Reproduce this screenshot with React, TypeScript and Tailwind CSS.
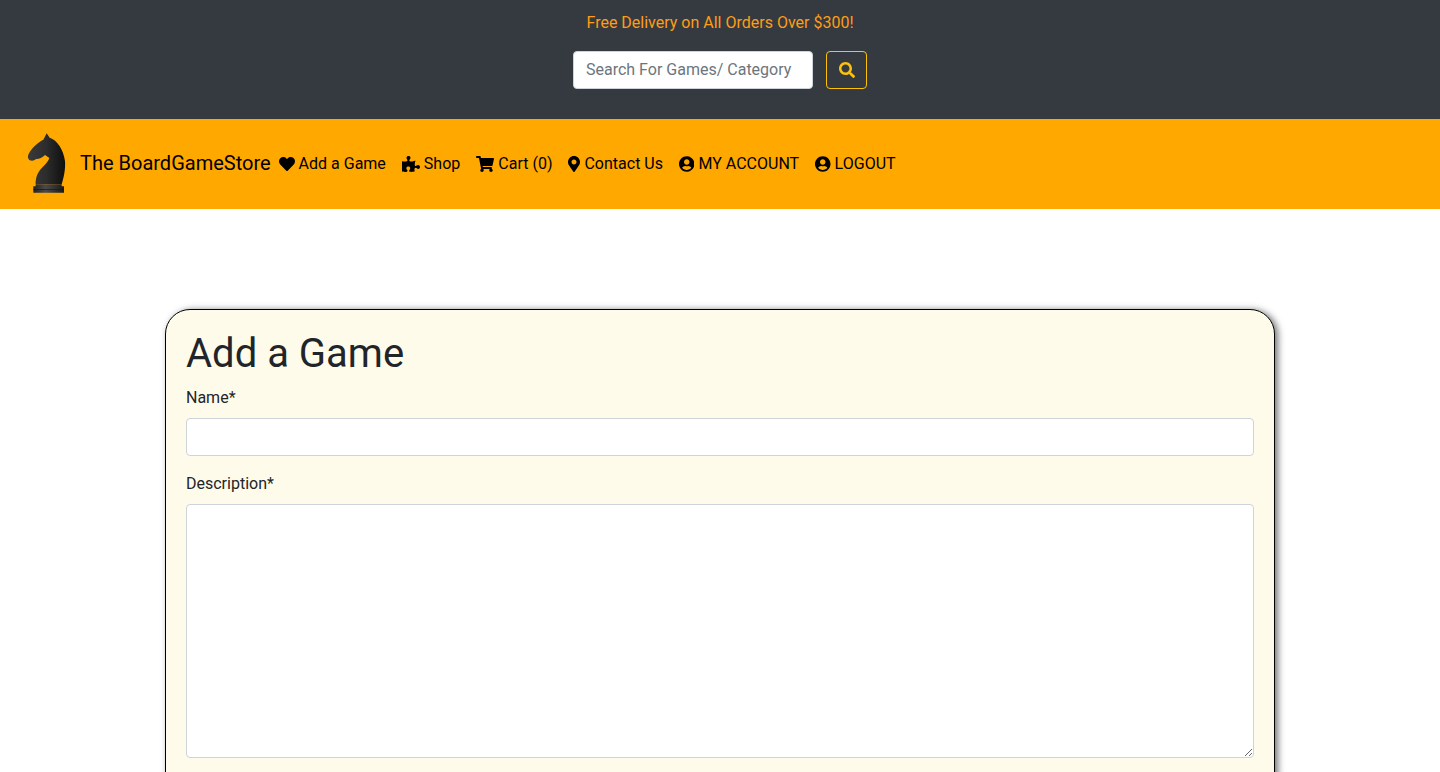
import { FaHeart, FaMapMarkerAlt, FaPuzzlePiece, FaSearch, FaShoppingCart, FaUserCircle } from 'react-icons/fa'
import type { IconType } from 'react-icons'

const navLinks: { label: string; icon: IconType; size: string }[] = [
  { label: 'Add a Game', icon: FaHeart, size: 'w-[16px]' },
  { label: 'Shop', icon: FaPuzzlePiece, size: 'w-[18px]' },
  { label: 'Cart (0)', icon: FaShoppingCart, size: 'w-[18px]' },
  { label: 'Contact Us', icon: FaMapMarkerAlt, size: 'w-[12px]' },
  { label: 'MY ACCOUNT', icon: FaUserCircle, size: 'w-[15.5px]' },
  { label: 'LOGOUT', icon: FaUserCircle, size: 'w-[15.5px]' },
]

function KnightLogo() {
  return (
    <svg viewBox="21 24 126 180" className="-mt-[2px] h-[60px] w-[42px]">
      <defs>
        <linearGradient id="knight" x1="0" y1="0" x2="1" y2="0">
          <stop offset="0" stopColor="#3a3a3a" />
          <stop offset="0.5" stopColor="#2c2c2c" />
          <stop offset="1" stopColor="#0e0e0e" />
        </linearGradient>
        <linearGradient id="knightBase" x1="0" y1="0" x2="1" y2="0">
          <stop offset="0" stopColor="#222222" />
          <stop offset="0.4" stopColor="#4a4a4a" />
          <stop offset="1" stopColor="#1a1a1a" />
        </linearGradient>
      </defs>
      <path
        d="M80 25 L89 38 C112 46 130 72 135 108 C137 132 131 158 125 178 L47 178 C46 160 52 142 66 128 C76 118 86 108 88 99 L75 90 C66 98 56 103 48 102 C42 108 34 108 28 105 C22 100 23 92 27 85 C36 68 54 52 70 44 Z"
        fill="url(#knight)"
      />
      <path d="M47 178 H125 V184 H132 V203 H40 V184 H47 Z" fill="url(#knightBase)" />
      <path d="M40 192 H132 V194 H40 Z" fill="#151515" />
    </svg>
  )
}

export default function App() {
  return (
    <div className="h-[772px] overflow-hidden bg-white font-['Roboto',sans-serif] text-[16px] text-black">
      <div className="h-[119px] bg-[#343a40] pt-[11px]">
        <p className="text-center leading-[24px] text-[#ff9d14]">Free Delivery on All Orders Over $300!</p>
        <form className="mt-[16px] flex justify-center gap-[13px]">
          <input
            placeholder="Search For Games/ Category"
            className="h-[38px] w-[240px] rounded border border-[#ced4da] bg-white px-3 pb-[2px] text-[#495057] placeholder:text-[#6c757d]"
          />
          <button type="button" className="flex h-[38px] w-[41px] items-center justify-center rounded border border-[#ffc107] text-[#ffc107]">
            <FaSearch className="h-[16px] w-[16px]" />
          </button>
        </form>
      </div>

      <nav className="flex h-[90px] items-center bg-[#ffa800] pl-[27px]">
        <a className="flex items-center">
          <KnightLogo />
          <span className="ml-[11px] pb-[2px] text-[20px] leading-[30px]">The BoardGameStore</span>
        </a>
        <ul className="ml-[8px] flex items-center gap-[16px]">
          {navLinks.map(({ label, icon: Icon, size }) => (
            <li key={label} className="flex items-center gap-[4px] leading-[24px]">
              <Icon className={`h-[16px] ${size}`} />
              {label}
            </li>
          ))}
        </ul>
      </nav>

      <main className="pt-[100px]">
        <div className="mx-auto w-[1110px] rounded-[25px] border border-black bg-[#fffbeb] px-5 pt-[20px] pb-[40px] shadow-[3px_1px_7px_rgba(0,0,0,0.55)]">
          <h1 className="text-[40px] leading-[48px] text-[#212529]">Add a Game</h1>
          <label className="mt-[8px] block leading-[24px] text-[#212529]">Name*</label>
          <input className="mt-[8px] block h-[38px] w-full rounded border border-[#ced4da] bg-white px-3" />
          <label className="mt-[16px] block leading-[24px] text-[#212529]">Description*</label>
          <textarea className="mt-[8px] block h-[254px] w-full rounded border border-[#ced4da] bg-white px-3" />
        </div>
      </main>
    </div>
  )
}
